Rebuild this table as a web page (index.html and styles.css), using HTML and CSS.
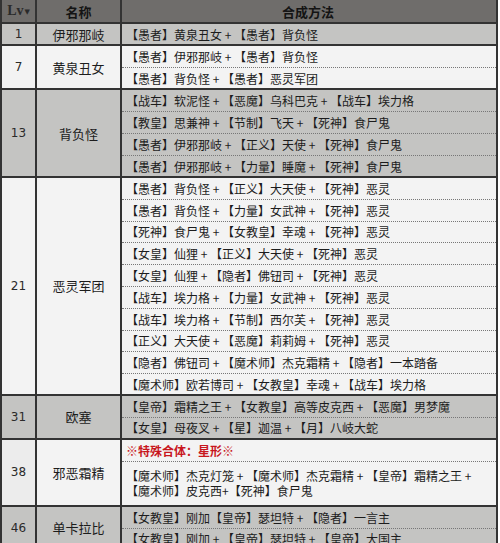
FILE: index.html
```html
<!DOCTYPE html>
<html lang="zh">
<head>
<meta charset="utf-8">
<link rel="stylesheet" href="styles.css">
</head>
<body>
<div class="sheet">
  <div class="group head">
    <div class="c lv"><span class="lvtxt">Lv</span><span class="tri">▼</span></div>
    <div class="c name">名称</div>
    <div class="c method">合成方法</div>
  </div>

  <div class="group gray">
    <div class="c lv">1</div>
    <div class="c name">伊邪那岐</div>
    <div class="lines">
      <div class="line">【愚者】黄泉丑女 + 【愚者】背负怪</div>
    </div>
  </div>

  <div class="group light">
    <div class="c lv">7</div>
    <div class="c name">黄泉丑女</div>
    <div class="lines">
      <div class="line">【愚者】伊邪那岐 + 【愚者】背负怪</div>
      <div class="line">【愚者】背负怪 + 【愚者】恶灵军团</div>
    </div>
  </div>

  <div class="group gray">
    <div class="c lv">13</div>
    <div class="c name">背负怪</div>
    <div class="lines">
      <div class="line">【战车】软泥怪 + 【恶魔】乌科巴克 + 【战车】埃力格</div>
      <div class="line">【教皇】思兼神 + 【节制】飞天 + 【死神】食尸鬼</div>
      <div class="line">【愚者】伊邪那岐 + 【正义】天使 + 【死神】食尸鬼</div>
      <div class="line">【愚者】伊邪那岐 + 【力量】睡魔 + 【死神】食尸鬼</div>
    </div>
  </div>

  <div class="group light tight">
    <div class="c lv">21</div>
    <div class="c name">恶灵军团</div>
    <div class="lines">
      <div class="line">【愚者】背负怪 + 【正义】大天使 + 【死神】恶灵</div>
      <div class="line">【愚者】背负怪 + 【力量】女武神 + 【死神】恶灵</div>
      <div class="line">【死神】食尸鬼 + 【女教皇】幸魂 + 【死神】恶灵</div>
      <div class="line">【女皇】仙狸 + 【正义】大天使 + 【死神】恶灵</div>
      <div class="line">【女皇】仙狸 + 【隐者】佛钮司 + 【死神】恶灵</div>
      <div class="line">【战车】埃力格 + 【力量】女武神 + 【死神】恶灵</div>
      <div class="line">【战车】埃力格 + 【节制】西尔芙 + 【死神】恶灵</div>
      <div class="line">【正义】大天使 + 【恶魔】莉莉姆 + 【死神】恶灵</div>
      <div class="line">【隐者】佛钮司 + 【魔术师】杰克霜精 + 【隐者】一本踏备</div>
      <div class="line">【魔术师】欧若博司 + 【女教皇】幸魂 + 【战车】埃力格</div>
    </div>
  </div>

  <div class="group gray">
    <div class="c lv">31</div>
    <div class="c name">欧塞</div>
    <div class="lines">
      <div class="line">【皇帝】霜精之王 + 【女教皇】高等皮克西 + 【恶魔】男梦魔</div>
      <div class="line">【女皇】母夜叉 + 【星】迦温 + 【月】八岐大蛇</div>
    </div>
  </div>

  <div class="group light">
    <div class="c lv lv38">38</div>
    <div class="c name">邪恶霜精</div>
    <div class="lines">
      <div class="line special">※特殊合体：星形※</div>
      <div class="line two">【魔术师】杰克灯笼 + 【魔术师】杰克霜精 + 【皇帝】霜精之王 +<br>【魔术师】皮克西+【死神】食尸鬼</div>
    </div>
  </div>

  <div class="group gray">
    <div class="c lv">46</div>
    <div class="c name">单卡拉比</div>
    <div class="lines">
      <div class="line">【女教皇】刚加【皇帝】瑟坦特 + 【隐者】一言主</div>
      <div class="line">【女教皇】刚加 + 【皇帝】瑟坦特 + 【皇帝】大国主</div>
    </div>
  </div>
</div>
</body>
</html>
```

FILE: styles.css
```css
html, body {
  margin: 0;
  padding: 0;
  background: #ffffff;
}

body {
  font-family: "Noto Sans CJK SC", "Noto Sans", sans-serif;
  font-size: 12px;
  color: #1c1c1c;
  overflow: hidden;
}

.sheet {
  width: 498px;
  box-sizing: border-box;
  border-left: 2px solid #333;
  border-right: 2px solid #333;
}

.group {
  display: grid;
  grid-template-columns: 35px 85px 1fr;
  border-bottom: 2px solid #333;
}

.c {
  display: flex;
  align-items: center;
  justify-content: center;
  box-sizing: border-box;
  border-right: 2px solid #333;
}

.method {
  border-right: 0;
}

.head {
  height: 22px;
  background: #6f6d6b;
  color: #141414;
  font-weight: bold;
  font-size: 13px;
}

.head .method {
  padding-right: 2px;
}

.lvtxt {
  font-family: "Liberation Serif", serif;
  font-size: 14px;
  font-weight: bold;
}

.tri {
  font-size: 7px;
  margin-left: 1px;
  margin-top: 2px;
}

.gray {
  background: #c4c4c2;
}

.light {
  background: #f3f3f3;
}

.lv {
  font-family: "DejaVu Sans", sans-serif;
  font-size: 12px;
  color: #2a2a2a;
}

.lv38 {
  background: #ececec;
}

.name {
  font-size: 13px;
}

.lines {
  display: flex;
  flex-direction: column;
}

.line {
  height: 22px;
  box-sizing: border-box;
  border-bottom: 1px dotted #777;
  display: flex;
  align-items: center;
  padding-left: 4px;
  white-space: nowrap;
}

.line:last-child {
  border-bottom: 0;
  height: 20px;
}

.tight .line {
  height: 21.8px;
}

.tight .line:last-child {
  height: 19.8px;
}

.line.two {
  display: block;
  height: 43px;
  line-height: 15px;
  padding-top: 6px;
}

.special {
  color: #c8161d;
  font-weight: bold;
}
```
